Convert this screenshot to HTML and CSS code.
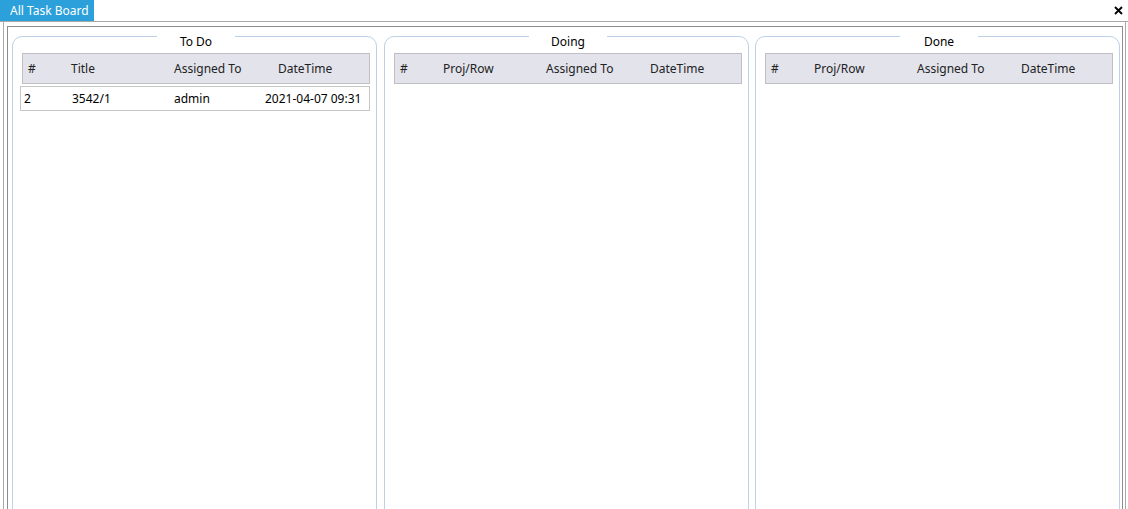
FILE: index.html
```html
<!DOCTYPE html>
<html>
<head>
<meta charset="utf-8">
<link rel="stylesheet" href="styles.css">
</head>
<body>
<div class="tabbar">
  <div class="tab">All Task Board</div>
  <div class="close" title="Close">
    <svg width="9" height="9" viewBox="0 0 9 9"><path d="M1 1 L8 8 M8 1 L1 8" stroke="#000" stroke-width="1.8" fill="none"/></svg>
  </div>
</div>
<div class="outer">
  <div class="inner">
    <div class="board">
      <section class="panel">
        <div class="title">To Do</div>
        <div class="head">
          <span>#</span><span>Title</span><span>Assigned To</span><span>DateTime</span>
        </div>
        <div class="row">
          <span>2</span><span>3542/1</span><span>admin</span><span>2021-04-07 09:31</span>
        </div>
      </section>
      <section class="panel">
        <div class="title">Doing</div>
        <div class="head">
          <span>#</span><span>Proj/Row</span><span>Assigned To</span><span>DateTime</span>
        </div>
      </section>
      <section class="panel">
        <div class="title">Done</div>
        <div class="head">
          <span>#</span><span>Proj/Row</span><span>Assigned To</span><span>DateTime</span>
        </div>
      </section>
    </div>
  </div>
</div>
</body>
</html>
```
FILE: styles.css
```css
html, body {
  margin: 0;
  padding: 0;
  background: #fff;
  overflow: hidden;
  height: 509px;
}
body {
  font-family: "Noto Sans", "Open Sans", sans-serif;
  font-size: 11px;
  color: #000;
}
.tabbar {
  display: flex;
  justify-content: space-between;
  align-items: flex-start;
  height: 22px;
  border-bottom: 1px solid #a8a8a8;
  box-sizing: border-box;
}
.tab {
  background: #2ba0da;
  color: #fff;
  width: 94px;
  height: 21px;
  font-size: 12px;
  line-height: 21px;
  padding-left: 10px;
  box-sizing: border-box;
  white-space: nowrap;
}
.close {
  width: 9px;
  height: 9px;
  margin: 6px 5px 0 0;
  display: flex;
}
.outer {
  margin: 0 2px 0 3px;
  border: 1px solid #a8a8a8;
  border-top: none;
  padding: 4px 2px 0 3px;
  height: 500px;
}
.inner {
  border: 1px solid #8c8c8c;
  height: 500px;
  padding: 9px 2px 0 4px;
}
.board {
  display: flex;
  gap: 6px;
}
.panel {
  width: 365px;
  box-sizing: border-box;
  height: 520px;
  border: 1px solid #bcd1e8;
  border-radius: 10px;
  padding: 0 6px 0 9px;
  display: flex;
  flex-direction: column;
}
.panel:first-child {
  margin-right: 1px;
}
.title {
  margin: -3px auto 0;
  width: 78px;
  background: #fff;
  text-align: center;
  line-height: 15px;
  font-size: 12px;
}
.head {
  margin-top: 4px;
  height: 31px;
  box-sizing: border-box;
  background: #e2e3eb;
  border: 1px solid #bfbfc4;
  display: grid;
  grid-template-columns: 43px 103px 104px 1fr;
  align-items: center;
  padding-left: 5px;
  font-size: 12px;
  color: #222;
}
.row {
  margin: 2px 0 0 -2px;
  height: 25px;
  box-sizing: border-box;
  border: 1px solid #c6c6c6;
  display: grid;
  grid-template-columns: 48px 102px 91px 1fr;
  align-items: center;
  padding-left: 3px;
  font-size: 12px;
  white-space: nowrap;
}
```
